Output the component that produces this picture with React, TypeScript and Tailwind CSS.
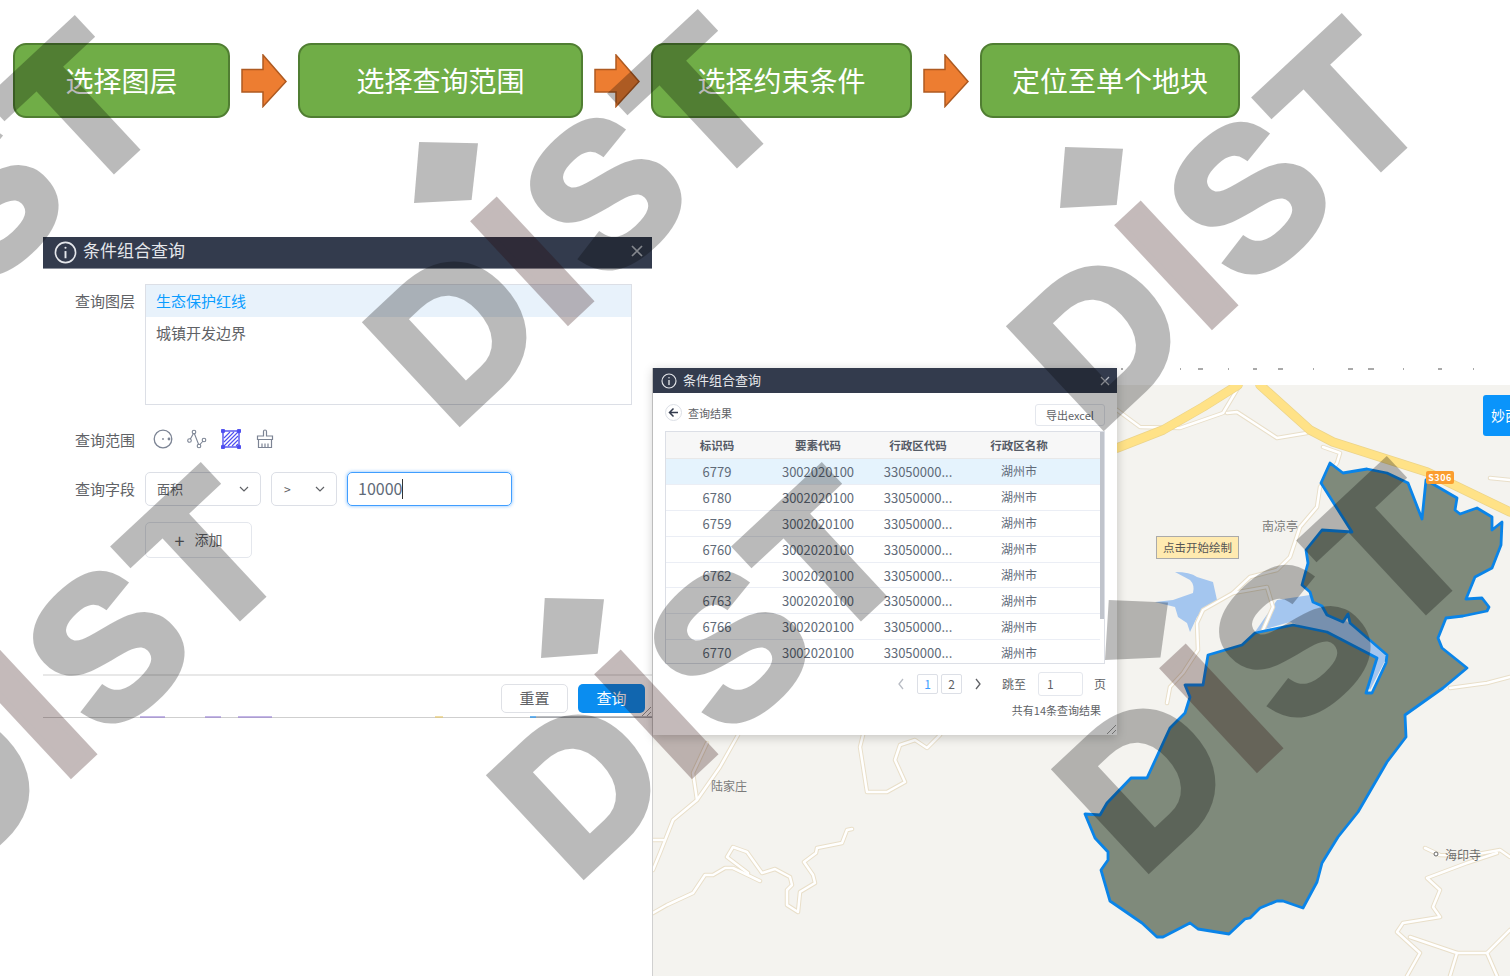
import React from "react";

const cjk = "font-['Noto_Sans_CJK_SC','Liberation_Sans',sans-serif]";

function Step({ text, w }: { text: string; w: string }) {
  return (
    <div className={`${w} h-[75px] rounded-[13px] bg-[#70ad47] border-2 border-[#507e32] flex items-center justify-center text-white text-[28px] leading-none pb-[2px]`}>
      {text}
    </div>
  );
}

function Arrow() {
  return (
    <svg width="46" height="54" viewBox="0 0 46 54" className="mx-[11px] shrink-0">
      <path d="M1 15.5H22V1L45 27.5L22 52.5V38H1Z" fill="#ed7d31" stroke="#ae5a21" strokeWidth="1.5" />
    </svg>
  );
}

function Info({ size }: { size: number }) {
  return (
    <svg width={size} height={size} viewBox="0 0 24 24" fill="none" stroke="#e5e7eb" strokeWidth="1.7" className="shrink-0">
      <circle cx="12" cy="12" r="10.5" />
      <path d="M12 10.5V18" strokeWidth="2" />
      <circle cx="12" cy="7" r="1.1" fill="#e5e7eb" stroke="none" />
    </svg>
  );
}

function Chevron() {
  return (
    <svg width="12" height="12" viewBox="0 0 12 12" fill="none" stroke="#606266" strokeWidth="1.2">
      <path d="M2 4l4 4 4-4" />
    </svg>
  );
}

function Grip() {
  return (
    <svg width="12" height="12" viewBox="0 0 12 12" fill="none" stroke="#9a9a9a" strokeWidth="1" className="absolute right-0 bottom-0">
      <path d="M2 11L11 2M7 11l4-4" />
    </svg>
  );
}

function LeftDialog() {
  return (
    <div className="w-[609px] h-[481px] flex flex-col shrink-0 bg-white border-b border-[#cfcfcf] relative">
      <div className="h-[32px] bg-[#333b4d] border-b border-[#8a8f9a] flex items-center pl-[11px] pr-[8px] text-[#e5e7eb] shrink-0">
        <Info size={23} />
        <span className="ml-[6px] text-[17px] leading-none pb-[6px]">条件组合查询</span>
        <span className="ml-auto text-[#b5b9c2] pb-[3px]">
          <svg width="14" height="14" viewBox="0 0 14 14" stroke="currentColor" strokeWidth="1.7"><path d="M2 2l10 10M12 2L2 12" /></svg>
        </span>
      </div>
      <div className="pt-[15px] pl-[32px] pr-[20px] text-[15px] text-[#606266] leading-none">
        <div className="flex">
          <div className="w-[70px] pt-[9px]">查询图层</div>
          <div className="w-[487px] h-[121px] border border-[#dcdfe6]">
            <div className="h-[32px] bg-[#e8f2fb] text-[#0a9dff] pl-[10px] flex items-center pb-[1px]">生态保护红线</div>
            <div className="h-[32px] pl-[10px] flex items-center pb-[1px]">城镇开发边界</div>
          </div>
        </div>
        <div className="flex items-center mt-[18px] h-[34px]">
          <div className="w-[70px] pb-[2px]">查询范围</div>
          <div className="flex items-center gap-[14px] ml-[8px] pb-[2px]">
            <svg width="20" height="20" viewBox="0 0 20 20" fill="none" stroke="#7c8494" strokeWidth="1.3">
              <circle cx="10" cy="10" r="8.8" />
              <circle cx="10" cy="10" r="0.9" fill="#7c8494" stroke="none" />
              <circle cx="16" cy="10" r="1.4" fill="#7c8494" stroke="none" />
            </svg>
            <svg width="20" height="20" viewBox="0 0 20 20" fill="none" stroke="#7c8494" strokeWidth="1.1">
              <path d="M2.5 11.5L7 3.5l5 13 5-5.5" />
              <circle cx="2.5" cy="11.5" r="1.8" fill="#fff" />
              <circle cx="7" cy="3" r="1.8" fill="#fff" />
              <circle cx="12" cy="17" r="1.8" fill="#fff" />
              <circle cx="17" cy="11" r="1.8" fill="#fff" />
            </svg>
            <svg width="20" height="20" viewBox="0 0 20 20" fill="none" stroke="#4f4ff0" strokeWidth="1.1">
              <rect x="2" y="2" width="16" height="16" fill="#fff" strokeWidth="1.4" />
              <path d="M3 9l6-6M3 13l10-10M3 17L17 3M7 17L17 7M11 17l6-6M15 17l2-2" />
              <circle cx="2" cy="2" r="1.7" fill="#4f4ff0" /><circle cx="18" cy="2" r="1.7" fill="#4f4ff0" />
              <circle cx="2" cy="18" r="1.7" fill="#4f4ff0" /><circle cx="18" cy="18" r="1.7" fill="#4f4ff0" />
            </svg>
            <svg width="20" height="20" viewBox="0 0 20 20" fill="none" stroke="#7c8494" strokeWidth="1.2">
              <path d="M8.5 7V2.5a1.5 1.5 0 013 0V7h6v3.5h-15V7zM3.5 10.5v8h13v-8M7 14.5v4M10 14.5v4M13 14.5v4" />
            </svg>
          </div>
        </div>
        <div className="flex items-center mt-[15px]">
          <div className="w-[70px] pb-[2px]">查询字段</div>
          <div className="w-[116px] h-[34px] border border-[#dcdfe6] rounded-[5px] pl-[11px] pr-[10px] flex items-center justify-between text-[13px]">
            <span className="pb-[2px]">面积</span><Chevron />
          </div>
          <div className="ml-[10px] w-[66px] h-[34px] border border-[#dcdfe6] rounded-[5px] pl-[12px] pr-[10px] flex items-center justify-between text-[12px]">
            &gt;<Chevron />
          </div>
          <div className="ml-[10px] w-[165px] h-[34px] border border-[#409eff] rounded-[5px] shadow-[0_0_3px_1px_rgba(64,158,255,0.4)] pl-[10px] flex items-center text-[16px] text-[#606a78]">
            <span className="pb-[2px]">10000</span><span className="w-px h-[20px] bg-[#333]" />
          </div>
        </div>
        <div className="mt-[16px] ml-[70px] w-[107px] h-[36px] border border-[#e4e7ed] rounded-[5px] flex items-center justify-center gap-[10px] text-[14px]">
          <span className="text-[18px]">+</span><span className="pb-[2px]">添加</span>
        </div>
      </div>
      <div className="mt-auto h-[43px] border-t-2 border-[#e8e8e8] flex justify-end items-start pt-[8px] pr-[7px] gap-[10px] relative">
        <div className="w-[67px] h-[29px] border border-[#dfe1e6] rounded-[5px] flex items-center justify-center text-[#606266] text-[15px]">重置</div>
        <div className="w-[67px] h-[29px] bg-[#0a8df0] rounded-[5px] flex items-center justify-center text-white text-[15px]">查询</div>
        <Grip />
      </div>
      <svg width="609" height="2" className="absolute left-0 bottom-[-1px]">
        <path d="M97 1h25M162 1h16M195 1h34" stroke="#8a6fd0" strokeWidth="1.2" />
        <path d="M392 1h8" stroke="#e6c66a" strokeWidth="1.2" />
        <path d="M487 1h6" stroke="#0a84e8" strokeWidth="1.2" />
        <path d="M493 1h116" stroke="#7b7f85" strokeWidth="1.2" />
      </svg>
    </div>
  );
}

const rows = ["6779", "6780", "6759", "6760", "6762", "6763", "6766", "6770"];

function RightDialog() {
  return (
    <div className="absolute left-0 top-0 w-[464px] h-[367px] bg-white shadow-[0_2px_10px_rgba(0,0,0,0.2)] flex flex-col">
      <div className="h-[25px] bg-[#333b4d] flex items-center pl-[8px] pr-[7px] text-[#e5e7eb] shrink-0">
        <Info size={16} />
        <span className="ml-[6px] text-[13px] leading-none pb-[2px]">条件组合查询</span>
        <span className="ml-auto text-[#b5b9c2]">
          <svg width="10" height="10" viewBox="0 0 10 10" stroke="currentColor" strokeWidth="1.3"><path d="M1 1l8 8M9 1L1 9" /></svg>
        </span>
      </div>
      <div className="flex items-center h-[38px] pl-[12px] pr-[12px] text-[#606266] shrink-0">
        <div className="w-[17px] h-[17px] rounded-full border border-[#dcdfe6] flex items-center justify-center">
          <svg width="11" height="11" viewBox="0 0 11 11" fill="none" stroke="#333b4d" strokeWidth="1.5"><path d="M10 5.5H1.5M5.5 1.5l-4 4 4 4" /></svg>
        </div>
        <span className="ml-[6px] text-[11px] leading-none mt-[2px]">查询结果</span>
        <div className="ml-auto mt-[6px] w-[70px] h-[22px] border border-[#e4e7ed] rounded-[3px] flex items-center justify-center text-[11px] leading-none">导出excel</div>
      </div>
      <div className="relative mx-[12px] h-[233px] border border-[#dcdfe6] overflow-hidden text-[13px] text-[#606a78] leading-none shrink-0">
        <div className="grid grid-cols-[102px_100px_100px_102px] h-[27px] bg-[#f7f7f7] items-center text-center font-bold text-[11.5px] text-[#555b66] border-b border-[#e8e8e8] mr-[4px] pt-[1px]">
          <span>标识码</span><span>要素代码</span><span>行政区代码</span><span>行政区名称</span>
        </div>
        {rows.map((r) => (
          <div key={r} className={`grid grid-cols-[102px_100px_100px_102px] h-[25.9px] items-center text-center border-b border-[#ebeef5] mr-[4px] ${r === "6779" ? "bg-[#e5f3fd]" : ""}`}>
            <span>{r}</span><span>3002020100</span><span>33050000...</span><span className="text-[12px]">湖州市</span>
          </div>
        ))}
        <div className="absolute right-0 top-0 w-[4px] h-[187px] bg-[#c0c4cc]" />
      </div>
      <div className="flex items-center h-[28px] mt-[6px] pl-[244px] text-[12px] leading-none text-[#606266] shrink-0">
        <svg width="8" height="12" viewBox="0 0 8 12" fill="none" stroke="#b8bcc4" strokeWidth="1.3"><path d="M6 1L2 6l4 5" /></svg>
        <div className="ml-[12px] w-[21px] h-[20px] border border-[#dcdfe6] rounded-[2px] flex items-center justify-center text-[#409eff]">1</div>
        <div className="ml-[3px] w-[21px] h-[20px] border border-[#dcdfe6] rounded-[2px] flex items-center justify-center">2</div>
        <svg width="8" height="12" viewBox="0 0 8 12" fill="none" stroke="#606266" strokeWidth="1.3" className="ml-[12px]"><path d="M2 1l4 5-4 5" /></svg>
        <span className="ml-[20px]">跳至</span>
        <div className="ml-[12px] w-[45px] h-[24px] border border-[#e4e7ed] rounded-[3px] flex items-center pl-[8px]">1</div>
        <span className="ml-[11px]">页</span>
      </div>
      <div className="mt-[7px] pr-[16px] text-right text-[11px] leading-none text-[#606266]">共有14条查询结果</div>
      <Grip />
    </div>
  );
}

const roadsWhite = [
  "M1117 410L1140 427L1180 428L1223 413L1238 388",
  "M1227 413L1237 412L1277 438L1307 433",
  "M1323 447L1340 453L1337 463L1320 487L1317 507L1300 527L1290 557L1277 570L1250 577L1233 593L1203 610L1197 623L1198 650L1183 673L1170 687L1167 703",
  "M1233 593L1267 587L1273 607L1263 630",
  "M738 735L720 767L697 800L673 820L660 853L653 870",
  "M707 743L693 773L697 800",
  "M653 840L663 840",
  "M863 735L860 747L867 792L887 792L905 782L895 760L900 745L915 740L927 748L940 735",
  "M653 913L667 905L693 893L705 875L713 875L725 868L733 868L760 881",
  "M748 873L727 857L733 847L747 852L762 873L775 869L790 877L792 885L787 890L787 905L798 912L800 892L815 883L813 875L804 862L816 853L817 848L842 843L847 830L852 829",
  "M1425 848L1440 855L1467 856L1500 850L1510 857",
  "M1497 853L1467 863L1427 878L1440 890L1433 907L1440 917L1403 923L1397 932L1420 953L1407 976",
  "M1410 937L1457 953L1450 976",
  "M1457 953L1487 953L1497 976",
  "M1487 953L1510 930",
  "M1450 688L1487 683L1510 677",
  "M1490 478L1510 480",
];

const parcel =
  "M1330 463L1343 473L1367 469L1387 473L1408 483L1422 519L1426 480L1457 498L1455 510L1460 514L1477 508L1492 517L1492 530L1502 522L1501 545L1492 568L1475 577L1466 599L1482 598L1489 607L1487 611L1463 616L1446 618L1438 638L1442 648L1467 668L1443 688L1405 715L1406 737L1387 762L1358 812L1338 837L1322 863L1317 882L1303 908L1283 901L1277 901L1260 908L1250 918L1245 919L1229 934L1198 929L1190 923L1163 937L1157 937L1142 923L1110 901L1101 870L1108 860L1108 852L1095 838L1085 814L1100 815L1107 803L1131 778L1147 778L1170 728L1185 713L1190 697L1185 685L1203 685L1208 655L1242 645L1255 633L1293 625L1327 632L1377 658L1366 693L1372 693L1386 663L1387 655L1350 623L1348 614L1343 622L1327 615L1322 606L1313 602L1310 592L1302 585L1308 563L1306 550L1322 530L1352 532L1321 483Z";

function MapArt() {
  return (
    <svg viewBox="653 385 857 591" className="w-[857px] h-[591px] block bg-[#f4f3ef]">
      <path d="M1175 572Q1190 572 1197 577L1213 582L1217 600L1207 607L1197 617L1190 632L1187 623L1178 617L1175 607L1155 602L1173 600L1193 593Q1195 585 1190 580Z" fill="#a4c6ef" />
      <path d="M1277 600L1310 595L1345 620L1387 657L1370 690L1340 640L1290 622L1255 632Z" fill="#a4c6ef" />
      <g fill="none" strokeLinejoin="round" strokeLinecap="round">
        {roadsWhite.map((d) => (
          <path key={d} d={d} stroke="#e9dfc9" strokeWidth="4.5" />
        ))}
        {roadsWhite.map((d) => (
          <path key={d + "w"} d={d} stroke="#ffffff" strokeWidth="2.5" />
        ))}
        <path d="M1117 448L1163 430L1203 407L1238 385M1260 385L1310 430L1333 442L1427 472L1510 512" stroke="#ecd48a" strokeWidth="9.5" />
        <path d="M1117 448L1163 430L1203 407L1238 385M1260 385L1310 430L1333 442L1427 472L1510 512" stroke="#ffe287" strokeWidth="8" />
      </g>
      <path d={parcel} fill="#7f8a7b" stroke="#0a84e8" strokeWidth="2.8" strokeLinejoin="round" />
      <circle cx="1436" cy="854" r="2" fill="#fff" stroke="#666" strokeWidth="1" />
    </svg>
  );
}

function RightPanel() {
  return (
    <div className="relative w-[858px] h-[608px] mt-[131px] shrink-0 border-l border-[#d0d0d0] pt-[17px]">
      <MapArt />
      <svg width="400" height="4" className="absolute left-[465px] top-0">
        <path d="M3 1h2M62 1h1M80 1h5M110 1h1M135 1h4M160 1h5M195 1h1M230 1h5M250 1h6M285 1h1M320 1h4M355 1h1" stroke="#555" strokeWidth="1" />
      </svg>
      <div className="absolute left-[58px] top-[412px] text-[12px] leading-none text-[#7a7a7a]">陆家庄</div>
      <div className="absolute left-[609px] top-[152px] text-[12px] leading-none text-[#7a7a7a]">南凉亭</div>
      <div className="absolute left-[792px] top-[481px] text-[12px] leading-none text-[#6d6d6d]">海印寺</div>
      <div className="absolute left-[503px] top-[168px] w-[83px] h-[23px] bg-[#ffeab0] border border-[#aaa] flex items-center justify-center text-[11.5px] leading-none text-[#555]">点击开始绘制</div>
      <div className="absolute left-[773px] top-[103px] w-[28px] h-[13px] bg-[#fb9d2f] rounded-[2px] flex items-center justify-center text-[9px] font-bold leading-none text-white tracking-[0.5px]">S306</div>
      <div className="absolute left-[830px] top-[27px] w-[28px] h-[41px] bg-[#0a94fb] rounded-l-[3px] overflow-hidden flex items-center pl-[8px] text-[14px] text-white whitespace-nowrap">妙西</div>
      <RightDialog />
    </div>
  );
}

function Word({ pos }: { pos: string }) {
  return (
    <div className={`absolute -translate-x-1/2 -translate-y-1/2 rotate-[-43deg] whitespace-nowrap font-['Liberation_Sans',sans-serif] font-bold text-[197px] leading-none tracking-[6px] text-black [-webkit-text-stroke:8px_#000] opacity-[0.267] ${pos}`}>
      D<span className="text-[#250000] [-webkit-text-stroke:8px_#250000]">I</span>ST
    </div>
  );
}

function Watermark() {
  return (
    <div className="absolute inset-0 overflow-hidden pointer-events-none">
      <Word pos="left-[80px] top-[673px]" />
      <Word pos="left-[701px] top-[673px]" />
      <Word pos="left-[1266px] top-[667px]" />
      <Word pos="left-[-46px] top-[226px]" />
      <Word pos="left-[577px] top-[220px]" />
      <Word pos="left-[1221px] top-[224px]" />
      <div className="absolute left-[541px] top-[598px] w-[63px] h-[60px] bg-[#00000044] [clip-path:polygon(6%_0,100%_2%,90%_93%,0_100%)]" />
      <div className="absolute left-[1105px] top-[600px] w-[63px] h-[60px] bg-[#00000044] [clip-path:polygon(6%_0,100%_4%,88%_96%,0_100%)]" />
      <div className="absolute left-[414px] top-[142px] w-[64px] h-[61px] bg-[#00000044] [clip-path:polygon(8%_0,100%_2%,90%_95%,0_100%)]" />
      <div className="absolute left-[1060px] top-[147px] w-[63px] h-[61px] bg-[#00000044] [clip-path:polygon(8%_0,100%_3%,90%_95%,0_100%)]" />
    </div>
  );
}

export default function App() {
  return (
    <div className={`relative w-[1510px] h-[976px] overflow-hidden bg-white ${cjk}`}>
      <div className="flex items-center pt-[43px] pl-[13px]">
        <Step text="选择图层" w="w-[217px]" />
        <Arrow />
        <Step text="选择查询范围" w="w-[285px]" />
        <Arrow />
        <Step text="选择约束条件" w="w-[261px]" />
        <Arrow />
        <Step text="定位至单个地块" w="w-[260px]" />
      </div>
      <div className="flex items-start mt-[119px] pl-[43px]">
        <LeftDialog />
        <RightPanel />
      </div>
      <Watermark />
    </div>
  );
}
